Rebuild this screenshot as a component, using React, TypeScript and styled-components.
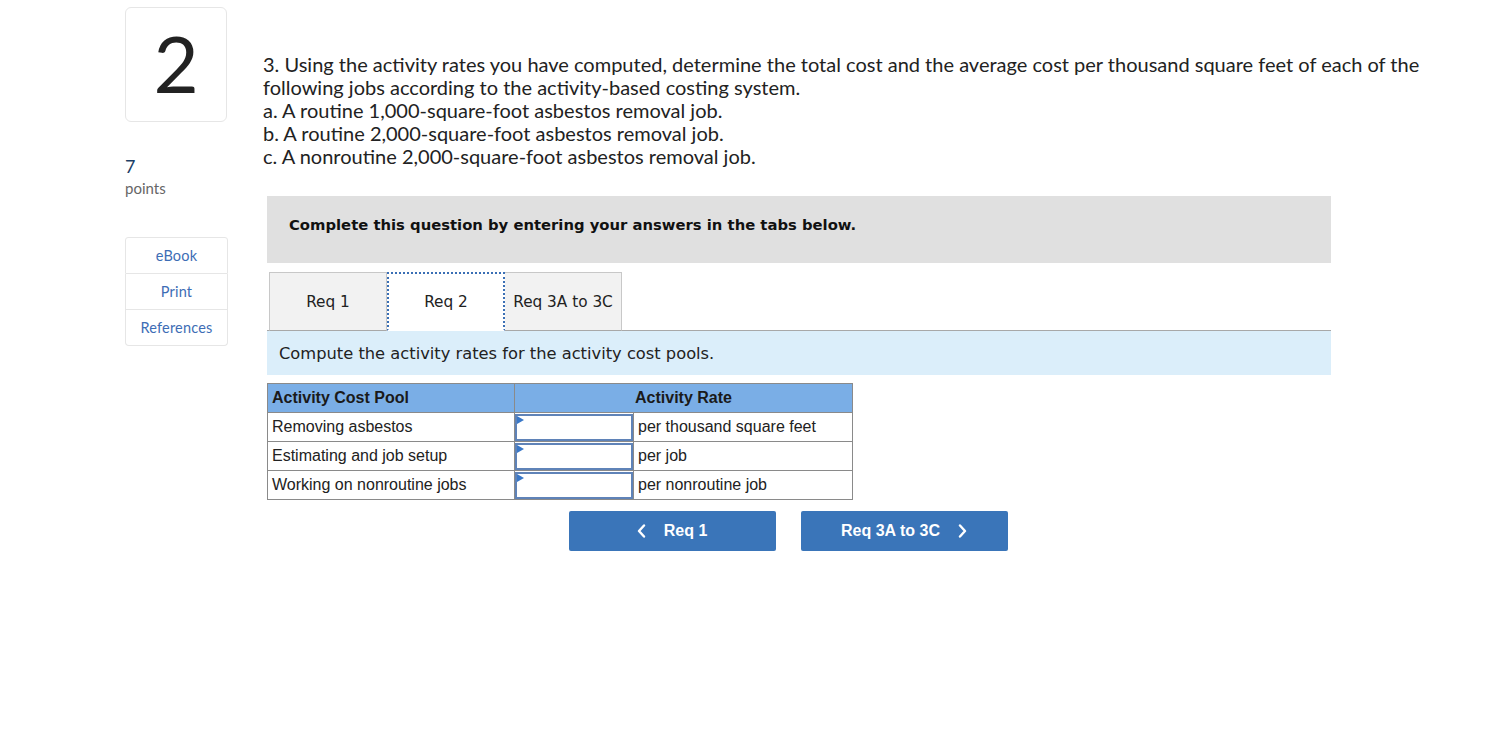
import styled, { createGlobalStyle } from 'styled-components';

const GlobalStyle = createGlobalStyle`
  html, body {
    margin: 0;
    padding: 0;
    background: #fff;
  }
  * {
    box-sizing: border-box;
  }
`;

const Page = styled.div`
  display: flex;
  align-items: flex-start;
  padding-left: 125px;
  width: 1505px;
  min-height: 729px;
  font-family: Lato, 'Open Sans', sans-serif;
  color: #222;
`;

const Side = styled.aside`
  width: 103px;
  padding-top: 7px;
  display: flex;
  flex-direction: column;
`;

const NumberBox = styled.div`
  width: 102px;
  height: 115px;
  border: 1px solid #e6e6e6;
  border-radius: 6px;
  display: flex;
  align-items: center;
  justify-content: center;
  font-size: 78px;
  font-weight: 400;
  color: #222;
  line-height: 1;
  padding-bottom: 4px;
`;

const Points = styled.div`
  margin-top: 34px;
  > strong {
    display: block;
    font-weight: 400;
    font-size: 18px;
    line-height: 20px;
    color: #1d3f66;
  }
  > span {
    display: block;
    font-size: 15px;
    line-height: 24px;
    color: #666;
  }
`;

const LinkList = styled.div`
  margin-top: 37px;
  display: flex;
  flex-direction: column;
`;

const SideLink = styled.a<{ $pos: 'top' | 'mid' | 'bottom' }>`
  display: flex;
  align-items: center;
  justify-content: center;
  height: ${(p) => (p.$pos === 'top' ? 37 : 36)}px;
  border: 1px solid #e6e6e6;
  border-top-width: ${(p) => (p.$pos === 'top' ? 1 : 0)}px;
  border-radius: ${(p) =>
    p.$pos === 'top' ? '3px 3px 0 0' : p.$pos === 'bottom' ? '0 0 4px 4px' : '0'};
  color: #3d6db5;
  font-size: 14.5px;
  letter-spacing: 0.2px;
  text-decoration: none;
  cursor: pointer;
`;

const Main = styled.main`
  margin-left: 35px;
  width: 1200px;
  display: flex;
  flex-direction: column;
`;

const Question = styled.div`
  margin-top: 53px;
  font-size: 20px;
  line-height: 23px;
  color: #222;
  white-space: nowrap;
  > p {
    margin: 0;
  }
`;

const Content = styled.div`
  margin-left: 4px;
  width: 1064px;
  display: flex;
  flex-direction: column;
`;

const Instructions = styled.div`
  margin-top: 28px;
  height: 67px;
  background: #e0e0e0;
  display: flex;
  align-items: center;
  padding: 0 22px 10px;
  font-family: 'DejaVu Sans', Verdana, sans-serif;
  font-weight: 700;
  font-size: 14.8px;
  color: #111;
`;

const TabBar = styled.div`
  margin-top: 9px;
  display: flex;
  padding-left: 2px;
  border-bottom: 1px solid #a8a8a8;
`;

const Tab = styled.button<{ $active?: boolean; $w: number }>`
  width: ${(p) => p.$w}px;
  height: 59px;
  margin-bottom: -1px;
  background: ${(p) => (p.$active ? '#fff' : '#f2f2f2')};
  border: ${(p) => (p.$active ? '2px dotted #3a6fb5' : '1px solid #c8c8c8')};
  border-bottom: ${(p) => (p.$active ? '2px dotted #3a6fb5' : '1px solid #a8a8a8')};
  border-bottom-color: ${(p) => (p.$active ? '#fff' : '#a8a8a8')};
  border-left-width: ${(p) => (p.$active ? 2 : 0)}px;
  &:first-child {
    border-left-width: 1px;
  }
  font-family: 'DejaVu Sans', Verdana, sans-serif;
  font-size: 15.3px;
  color: #222;
  padding: 0;
  cursor: pointer;
`;

const InfoBar = styled.div`
  height: 44px;
  background: #dbeefa;
  display: flex;
  align-items: center;
  padding-left: 12px;
  font-family: 'DejaVu Sans', Verdana, sans-serif;
  font-size: 16.3px;
  color: #222;
`;

const Table = styled.table`
  margin-top: 8px;
  width: 586px;
  border-collapse: collapse;
  font-family: 'Liberation Sans', Arial, sans-serif;
  font-size: 16px;
  color: #222;
  th,
  td {
    border: 1px solid #8a8a8a;
    height: 29px;
    padding: 0 4px;
    text-align: left;
    font-weight: 400;
  }
  th {
    background: #7aaee6;
    font-weight: 700;
    color: #1a1a1a;
  }
  th.center {
    text-align: center;
  }
`;

const InputCell = styled.td`
  && {
    width: 119px;
    padding: 0;
  }
`;

const AnswerBox = styled.div`
  position: relative;
  height: 27px;
  border: 2px solid #5f83b8;
  background: #fff;
  &::before {
    content: '';
    position: absolute;
    left: 0;
    top: 0;
    border-left: 7px solid #3a78c8;
    border-top: 4px solid transparent;
    border-bottom: 4px solid transparent;
  }
`;

const NavRow = styled.div`
  margin-top: 11px;
  display: flex;
  justify-content: center;
  gap: 25px;
  padding-right: 22px;
`;

const NavButton = styled.button`
  width: 207px;
  height: 40px;
  border: 0;
  border-radius: 2px;
  background: #3a75b9;
  color: #fff;
  font-family: 'Liberation Sans', Arial, sans-serif;
  font-weight: 700;
  font-size: 16px;
  display: flex;
  align-items: center;
  justify-content: center;
  gap: 18px;
  cursor: pointer;
`;

const Chevron = ({ dir }: { dir: 'left' | 'right' }) => (
  <svg width="9" height="14" viewBox="0 0 9 14" fill="none">
    <path
      d={dir === 'left' ? 'M7 1.5 L2 7 L7 12.5' : 'M2 1.5 L7 7 L2 12.5'}
      stroke="#fff"
      strokeWidth="2.4"
      strokeLinecap="round"
      strokeLinejoin="round"
    />
  </svg>
);

const rows = [
  { pool: 'Removing asbestos', unit: 'per thousand square feet' },
  { pool: 'Estimating and job setup', unit: 'per job' },
  { pool: 'Working on nonroutine jobs', unit: 'per nonroutine job' },
];

const App = () => (
  <>
    <GlobalStyle />
    <Page>
      <Side>
        <NumberBox>2</NumberBox>
        <Points>
          <strong>7</strong>
          <span>points</span>
        </Points>
        <LinkList>
          <SideLink $pos="top">eBook</SideLink>
          <SideLink $pos="mid">Print</SideLink>
          <SideLink $pos="bottom">References</SideLink>
        </LinkList>
      </Side>
      <Main>
        <Question>
          <p>
            3. Using the activity rates you have computed, determine the total cost and the
            average cost per thousand square feet of each of the
          </p>
          <p>following jobs according to the activity-based costing system.</p>
          <p>a. A routine 1,000-square-foot asbestos removal job.</p>
          <p>b. A routine 2,000-square-foot asbestos removal job.</p>
          <p>c. A nonroutine 2,000-square-foot asbestos removal job.</p>
        </Question>
        <Content>
          <Instructions>Complete this question by entering your answers in the tabs below.</Instructions>
          <TabBar>
            <Tab $w={118}>Req 1</Tab>
            <Tab $w={118} $active>
              Req 2
            </Tab>
            <Tab $w={117}>Req 3A to 3C</Tab>
          </TabBar>
          <InfoBar>Compute the activity rates for the activity cost pools.</InfoBar>
          <Table>
            <thead>
              <tr>
                <th style={{ width: 247 }}>Activity Cost Pool</th>
                <th className="center" colSpan={2}>
                  Activity Rate
                </th>
              </tr>
            </thead>
            <tbody>
              {rows.map((r) => (
                <tr key={r.pool}>
                  <td>{r.pool}</td>
                  <InputCell>
                    <AnswerBox />
                  </InputCell>
                  <td>{r.unit}</td>
                </tr>
              ))}
            </tbody>
          </Table>
          <NavRow>
            <NavButton>
              <Chevron dir="left" />
              Req 1
            </NavButton>
            <NavButton>
              Req 3A to 3C
              <Chevron dir="right" />
            </NavButton>
          </NavRow>
        </Content>
      </Main>
    </Page>
  </>
);

export default App;
